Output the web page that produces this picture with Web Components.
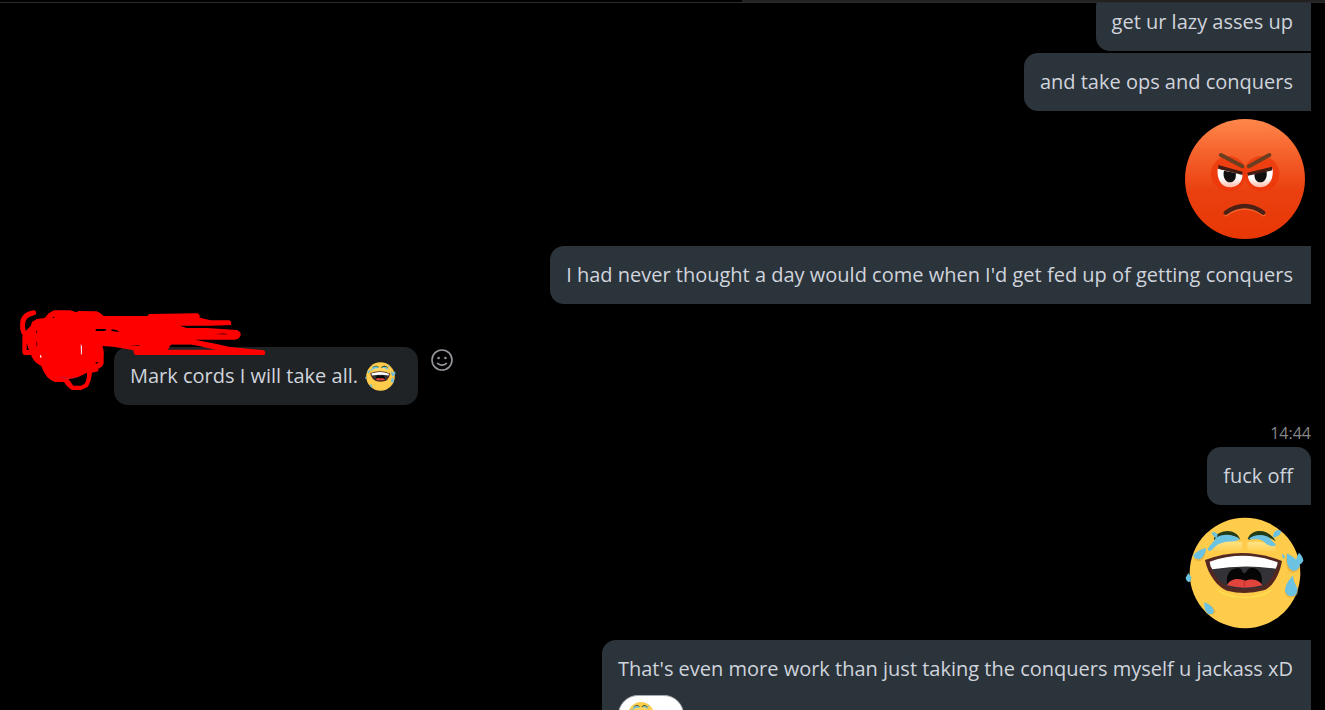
<!DOCTYPE html>
<html lang="en">
<head>
<meta charset="utf-8">
<meta name="viewport" content="width=device-width, initial-scale=1">
<title>Chat</title>
<style>
	html, body {
		margin: 0;
		height: 100%;
		background: #000;
		overflow: hidden;
	}

	body {
		font-family: "Segoe UI", "Open Sans", "Noto Sans", sans-serif;
		font-size: 20px;
		line-height: 30px;
		color: #d0d4dc;
	}
</style>
</head>
<body>
<chat-window>
	<chat-message side="out">get ur lazy asses up</chat-message>
	<chat-message side="out">and take ops and conquers</chat-message>
	<chat-sticker><emoji-face name="angry"></emoji-face></chat-sticker>
	<chat-message side="out">I had never thought a day would come when I'd get fed up of getting conquers</chat-message>
	<chat-message side="in">
		Mark cords I will take all. <emoji-face name="laugh"></emoji-face>
		<react-button slot="action"></react-button>
		<marker-scribble slot="cover"></marker-scribble>
	</chat-message>
	<chat-time>14:44</chat-time>
	<chat-message side="out" first>fuck off</chat-message>
	<chat-sticker><emoji-face name="laugh"></emoji-face></chat-sticker>
	<chat-message side="out">
		That's even more work than just taking the conquers myself u jackass xD
		<reaction-pill slot="reactions"></reaction-pill>
	</chat-message>
</chat-window>

<script>
class ChatWindow extends HTMLElement {
	constructor() {
		super();
		this.attachShadow({ mode: "open" });
		this.shadowRoot.innerHTML = `
      <style>
        :host {
          display: flex;
          flex-direction: column;
          height: 100vh;
        }

        header {
          flex: none;
          display: flex;
          height: 2px;
          border-bottom: 1px solid #2b2b30;
        }

        .left {
          flex: 56;
        }

        .right {
          flex: 44;
          background: #222;
        }

        main {
          flex: 1;
          min-height: 0;
          overflow: hidden;
          padding-right: 14px;
        }

        /* the log is scrolled a little past its first message */
        .log {
          display: flex;
          flex-direction: column;
          gap: 2px;
          margin-top: -10px;
        }
      </style>

      <header>
        <div class="left"></div>
        <div class="right"></div>
      </header>
      <main>
        <div class="log"><slot></slot></div>
      </main>
    `;
	}
}

class ChatMessage extends HTMLElement {
	constructor() {
		super();
		this.attachShadow({ mode: "open" });
		this.shadowRoot.innerHTML = `
      <style>
        :host {
          display: flex;
          position: relative;
          align-items: flex-start;
          justify-content: flex-end;
        }

        .bubble {
          padding: 14px 18px 14px 16px;
          background: #2b333b;
          border-radius: 14px 0 0 14px;
        }

        :host([first]) .bubble {
          border-top-right-radius: 14px;
        }

        :host([side="in"]) {
          justify-content: flex-start;
          gap: 12px;
          padding: 41px 0 0 114px;
        }

        :host([side="in"]) .bubble {
          padding-right: 22px;
          background: #1f2326;
          border-radius: 14px;
        }

        ::slotted(emoji-face) {
          width: 31px;
          margin: -4px 0 -2px 2px;
          vertical-align: -7px;
        }
      </style>

      <div class="bubble">
        <slot></slot>
        <slot name="reactions"></slot>
      </div>
      <slot name="action"></slot>
      <slot name="cover"></slot>
    `;
	}
}

class ChatTime extends HTMLElement {
	constructor() {
		super();
		this.attachShadow({ mode: "open" });
		this.shadowRoot.innerHTML = `
      <style>
        :host {
          display: flex;
          justify-content: flex-end;
          padding-top: 14px;
          font-size: 16px;
          line-height: 24px;
          color: #85868a;
        }
      </style>
      <time><slot></slot></time>
    `;
	}
}

class ChatSticker extends HTMLElement {
	constructor() {
		super();
		this.attachShadow({ mode: "open" });
		this.shadowRoot.innerHTML = `
      <style>
        :host {
          display: flex;
          justify-content: flex-end;
          padding: 6px 6px 5px 0;
        }

        ::slotted(emoji-face) {
          width: 120px;
        }
      </style>
      <slot></slot>
    `;
	}
}

const FACES = {
	angry: `
    <svg viewBox="45 26 360 360" role="img" aria-label="Angry">
      <defs>
        <linearGradient id="skin" x1="0" y1="0" x2="0" y2="1">
          <stop offset="0" stop-color="#ff874b"/>
          <stop offset=".3" stop-color="#f5602a"/>
          <stop offset=".6" stop-color="#ea4010"/>
          <stop offset="1" stop-color="#e83705"/>
        </linearGradient>
        <linearGradient id="eye" x1="0" y1="0" x2="0" y2="1">
          <stop offset=".5" stop-color="#fff"/>
          <stop offset="1" stop-color="#fdbba9"/>
        </linearGradient>
      </defs>
      <circle cx="225" cy="206" r="180" fill="url(#skin)"/>
      <circle cx="176" cy="190" r="53" fill="#ed3508" opacity=".7"/>
      <circle cx="275" cy="190" r="53" fill="#ed3508" opacity=".7"/>
      <path d="M143 175L217 191C219 213 203 231 180 231C155 231 140 208 143 175Z" fill="url(#eye)"/>
      <path d="M308 175L234 191C232 213 248 231 271 231C296 231 311 208 308 175Z" fill="url(#eye)"/>
      <path d="M162 181L197 188C200 205 192 216 180 216C166 216 157 199 162 181Z" fill="#111"/>
      <path d="M289 181L254 188C251 205 259 216 271 216C285 216 294 199 289 181Z" fill="#111"/>
      <path d="M145 164L218 184L217 194L145 175Z" fill="#431c13"/>
      <path d="M306 169L232 187L234 196L307 180Z" fill="#431c13"/>
      <path d="M153 134L217 168M298 134L237 168" fill="none" stroke="#6b3e20" stroke-width="12" stroke-linecap="round"/>
      <path d="M168 312Q224 272 281 312" fill="none" stroke="#f6622c" stroke-width="12" stroke-linecap="round"/>
      <path d="M167 307Q224 267 280 307" fill="none" stroke="#4b2116" stroke-width="13" stroke-linecap="round"/>
    </svg>`,
	laugh: `
    <svg viewBox="45 24 360 360" role="img" aria-label="Laughing with tears">
      <defs>
        <linearGradient id="cheek" x1="0" y1="0" x2="0" y2="1">
          <stop offset="0" stop-color="#ffe588"/>
          <stop offset="1" stop-color="#fecb4b"/>
        </linearGradient>
      </defs>
      <circle cx="225" cy="204" r="166" fill="#fecb4b"/>
      <path d="M130 109Q170 103 217 112V137Q170 138 130 142Z" fill="url(#cheek)"/>
      <path d="M232 112Q280 105 317 122V143Q280 134 232 137Z" fill="url(#cheek)"/>
      <path d="M137 250Q225 303 309 250Q287 279 225 279Q163 279 137 250Z" fill="#ffe04d"/>
      <path d="M131 101C147 71 199 68 211 104C190 88 156 86 137 108Z" fill="#243b17"/>
      <path d="M233 101C246 68 298 70 317 109C292 91 260 86 239 105Z" fill="#243b17"/>
      <path d="M113 134C117 121 129 115 137 99C158 84 192 87 209 103C195 113 174 107 158 113C142 116 133 127 124 136Q117 141 113 134Z" fill="#6bc2e1"/>
      <path d="M235 103C251 87 287 86 301 101C306 109 314 112 318 121C303 129 290 118 280 109C267 100 249 104 235 103Z" fill="#6bc2e1"/>
      <path d="M105 165Q218 121 336 168C329 209 307 248 281 256Q226 271 171 257C143 246 115 212 105 165Z" fill="#542820"/>
      <path d="M119 172Q223 135 323 173C316 208 296 238 275 246Q225 257 178 247C153 239 128 210 119 172Z" fill="#333236"/>
      <path d="M172 238C165 208 183 187 208 190C218 193 214 203 224 205C232 201 230 192 242 189C266 186 281 207 274 239Z" fill="#050505"/>
      <path d="M171 241C181 219 212 219 224 228C238 219 269 222 277 241Q225 255 171 241Z" fill="#e0443c"/>
      <path d="M223 225L224 246" stroke="#b9332e" stroke-width="3"/>
      <path d="M119 170Q222 134 323 172Q323 181 317 191Q223 177 127 193Q120 184 119 170Z" fill="#fff"/>
      <g fill="#d99a2f" opacity=".45">
        <path d="M105 132Q112 153 91 169Q75 169 72 158Z"/>
        <path d="M367 214Q343 247 345 263Q350 281 368 277Q391 272 381 251Z"/>
        <path d="M104 293Q131 302 137 321Q128 335 110 326Z"/>
        <path d="M349 146Q344 184 359 202Q382 205 391 185Z"/>
      </g>
      <g fill="#6bc2e1">
        <path d="M108 128Q108 149 91 162Q77 165 70 152Q76 138 108 128Z"/>
        <path d="M125 83Q136 77 143 89L140 99Q128 94 125 83Z"/>
        <path d="M309 93Q311 77 325 74L334 79Q330 95 309 98Z"/>
        <path d="M351 145Q383 161 390 183Q382 200 367 197Q346 188 351 145Z"/>
        <path d="M387 143Q399 154 400 168Q392 182 381 177Q374 163 387 143Z"/>
        <path d="M369 211Q369 229 382 249Q385 271 366 274Q350 275 345 259Q343 240 369 211Z"/>
        <path d="M103 291Q126 301 132 317Q130 330 116 327Q101 319 103 291Z"/>
        <path d="M55 204L64 217Q64 230 55 232Q47 227 47 218Z"/>
        <path d="M336 146L345 154L342 161Q335 158 336 146Z"/>
      </g>
    </svg>`
};

class EmojiFace extends HTMLElement {
	static get observedAttributes() {
		return ["name"];
	}

	constructor() {
		super();
		this.attachShadow({ mode: "open" });
	}

	attributeChangedCallback() {
		this.shadowRoot.innerHTML = `
      <style>
        :host {
          display: inline-block;
        }

        svg {
          display: block;
          width: 100%;
        }
      </style>
      ${FACES[this.getAttribute("name")] || ""}
    `;
	}
}

class ReactButton extends HTMLElement {
	constructor() {
		super();
		this.attachShadow({ mode: "open" });
		this.shadowRoot.innerHTML = `
      <style>
        :host {
          display: block;
        }

        button {
          display: block;
          padding: 1px 0;
          border: 0;
          background: none;
          color: #96979c;
          cursor: pointer;
        }

        svg {
          display: block;
          width: 24px;
          height: 24px;
        }
      </style>
      <button type="button" aria-label="React to this message">
        <svg viewBox="0 0 24 24" fill="none" stroke="currentColor" stroke-width="1.6" stroke-linecap="round" aria-hidden="true">
          <circle cx="12" cy="12" r="10"/>
          <path d="M7.6 15.4q4.4 3.6 8.8 0"/>
          <circle cx="8.6" cy="10" r="1.3" fill="currentColor" stroke="none"/>
          <circle cx="15.4" cy="10" r="1.3" fill="currentColor" stroke="none"/>
        </svg>
      </button>
    `;
	}
}

class ReactionPill extends HTMLElement {
	constructor() {
		super();
		this.attachShadow({ mode: "open" });
		this.shadowRoot.innerHTML = `
      <style>
        :host {
          display: block;
          margin-top: 11px;
        }

        button {
          display: flex;
          align-items: center;
          width: 66px;
          height: 40px;
          padding: 0 8px;
          border: 1px solid #a9abb2;
          border-radius: 20px;
          background: #fff;
          cursor: pointer;
        }

        emoji-face {
          width: 28px;
        }
      </style>
      <button type="button" aria-label="Laughing reaction">
        <emoji-face name="laugh"></emoji-face>
      </button>
    `;
	}
}

class MarkerScribble extends HTMLElement {
	constructor() {
		super();
		this.attachShadow({ mode: "open" });
		this.shadowRoot.innerHTML = `
      <style>
        /* lies over the sender's avatar and name */
        :host {
          position: absolute;
          left: 10px;
          top: -6px;
          width: 270px;
          pointer-events: none;
        }

        svg {
          display: block;
          width: 100%;
        }
      </style>
      <svg viewBox="0 0 810 345" aria-hidden="true">
        <path d="M48 92L62 78L66 66L80 57L104 54L116 40L132 31H180L200 37L205 33L260 34Q275 40 281 48H412L418 42L562 40Q571 42 569 53L602 61H658Q666 64 663 75L600 77H510L530 84H590L681 90Q694 96 692 105Q688 119 674 119H555L620 132L660 141L762 151Q769 157 763 165H376Q369 160 371 151L310 140L277 138Q283 150 281 170V190Q278 202 265 206V214L246 218Q245 240 234 260L213 270H186Q174 264 162 246H135Q107 237 94 198Q72 188 63 165H43Q37 164 37 156V110Z" fill="#f00"/>
        <path d="M71 38Q38 44 38 72Q36 96 48 106" fill="none" stroke="#f00" stroke-width="15" stroke-linecap="round" stroke-linejoin="round"/>
        <!-- gaps left between the strokes -->
        <path d="M50 130L57 150H50Z" fill="#000"/>
        <path d="M258 87H289L286 93H256ZM305 88L320 90L328 96L304 93Z" fill="#000"/>
        <path d="M176 238L203 232L231 218Q232 240 223 252L213 257H190Z" fill="#000"/>
        <path d="M79 90L82 96L79 100ZM79 122L82 132L80 142ZM129 50L134 52L129 55Z" fill="#000"/>
        <path d="M256 187L267 187L258 192Z" fill="#000"/>
        <path d="M358 136H388V138Z" fill="#000"/>
        <path d="M484 134H545L619 149H473Z" fill="#1f2326"/>
        <path d="M484 134H545L581 141H477Z" fill="#000"/>
        <path d="M615 103L641 99L654 104Z" fill="#7d0000"/>
        <path d="M212 132L216 138V160L213 166Z" fill="#ecdcf0"/>
        <path d="M90 164L94 168V175L90 171Z" fill="#fff"/>
        <path d="M145 231Q178 240 204 231L180 235Z" fill="#943080"/>
      </svg>
    `;
	}
}

customElements.define("emoji-face", EmojiFace);
customElements.define("react-button", ReactButton);
customElements.define("reaction-pill", ReactionPill);
customElements.define("marker-scribble", MarkerScribble);
customElements.define("chat-message", ChatMessage);
customElements.define("chat-sticker", ChatSticker);
customElements.define("chat-time", ChatTime);
customElements.define("chat-window", ChatWindow);
</script>
</body>
</html>
